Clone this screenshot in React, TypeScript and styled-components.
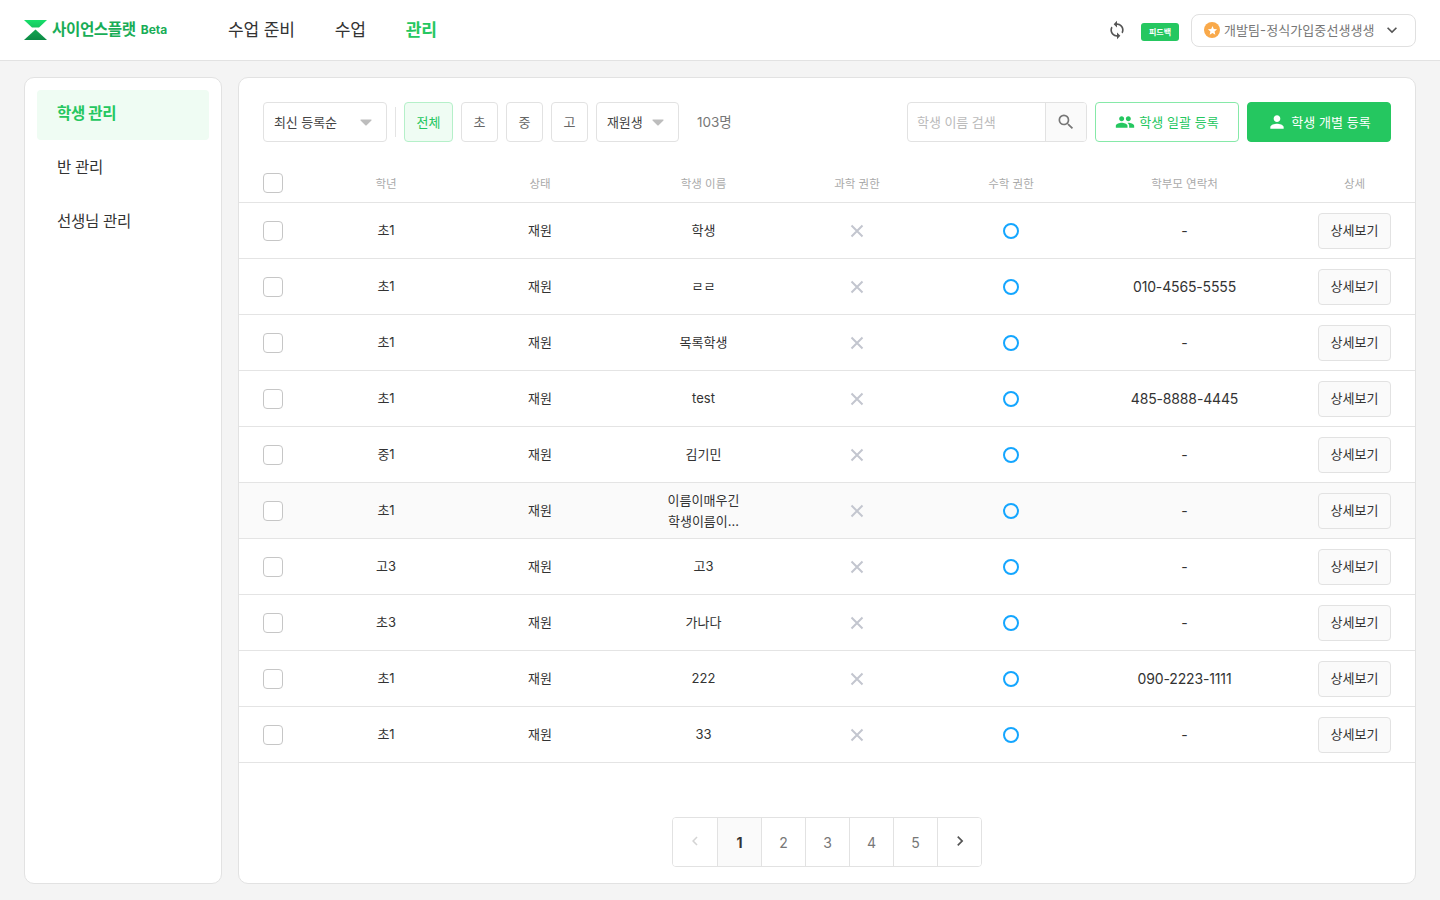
import React from "react";
import styled, { createGlobalStyle } from "styled-components";
import { MdSync, MdPeople, MdPerson, MdSearch, MdExpandMore, MdChevronLeft, MdChevronRight, MdStar } from "react-icons/md";

const Global = createGlobalStyle`
  * { box-sizing: border-box; }
  html, body { margin: 0; height: 100%; }
  body { background: #f4f4f4; font-family: Inter, "Noto Sans CJK KR", "Noto Sans", sans-serif; color: #333; }
  #root { height: 900px; overflow: hidden; }
`;

const Header = styled.header`
  height: 61px; background: #fff; border-bottom: 1px solid #e2e2e2;
  display: flex; align-items: center; padding: 0 24px;
`;
const Logo = styled.div`display: flex; align-items: center; width: 204px; color: #19ad57; line-height: 20px; padding-bottom: 1px;`;
const LogoName = styled.span`font-size: 15.6px; font-weight: 700; margin-left: 5px; letter-spacing: -0.4px;`;
const Beta = styled.span`font-size: 12px; font-weight: 700; margin-left: 5px;`;
const Nav = styled.nav`display: flex; gap: 40px; flex: 1; line-height: 24px; padding-bottom: 1px;`;
const NavItem = styled.span<{ $active?: boolean }>`
  font-size: 17.1px; font-weight: ${p => (p.$active ? 700 : 400)}; color: ${p => (p.$active ? "#25c760" : "#333")}; letter-spacing: -0.2px;
`;
const SyncButton = styled.span`display: flex; color: #555; margin-right: 14px;`;
const Badge = styled.span`
  width: 38px; height: 18px; border-radius: 3px; background: #25c760; color: #fff; font-size: 8px; font-weight: 700;
  display: flex; align-items: center; justify-content: center; margin: 3px 12px 0 0;
`;
const Profile = styled.div`
  width: 225px; height: 33px; border: 1px solid #e0e0e0; border-radius: 8px; display: flex; align-items: center;
  padding: 0 12px; color: #777; font-size: 13px; letter-spacing: 0.08px; line-height: 18px;
`;
const Medal = styled.span`
  width: 16px; height: 16px; border-radius: 50%; background: #f9a94a; color: #fff; display: flex; align-items: center; justify-content: center; margin-right: 4px; flex: none;
`;
const ProfileName = styled.span`flex: 1; white-space: nowrap; padding-bottom: 1px;`;
const ProfileChevron = styled.span`display: flex; color: #555; margin-right: 1px;`;

const Body = styled.div`display: flex; gap: 16px; padding: 16px 24px; height: 839px;`;
const Sidebar = styled.aside`
  width: 198px; background: #fff; border: 1px solid #e2e2e2; border-radius: 10px; padding: 12px; display: flex; flex-direction: column; gap: 4px;
`;
const SideItem = styled.div<{ $active?: boolean }>`
  height: 50px; border-radius: 4px; display: flex; align-items: center; padding: 0 20px 2px; font-size: 15.5px; letter-spacing: -0.3px; line-height: 22px;
  background: ${p => (p.$active ? "#effcf3" : "transparent")}; color: ${p => (p.$active ? "#25c760" : "#333")}; font-weight: ${p => (p.$active ? 700 : 400)};
`;
const Main = styled.main`
  flex: 1; background: #fff; border: 1px solid #e2e2e2; border-radius: 10px; display: flex; flex-direction: column;
`;
const Toolbar = styled.div`display: flex; align-items: center; padding: 24px 24px 0; height: 64px; gap: 8px; line-height: 20px;`;
const SelectBox = styled.div<{ $w: number }>`
  width: ${p => p.$w}px; height: 40px; border: 1px solid #e2e2e2; border-radius: 4px; display: flex; align-items: center; justify-content: space-between;
  padding: 0 14px 0 10px; font-size: 13px; color: #444; letter-spacing: -0.1px;
`;
const Divider = styled.span`width: 1px; height: 30px; background: #e4e4e4;`;
const Chip = styled.div<{ $active?: boolean }>`
  height: 40px; width: ${p => (p.$active ? 49 : 37)}px; border-radius: 4px; display: flex; align-items: center; justify-content: center; font-size: 13px;
  border: 1px solid ${p => (p.$active ? "#b5f0c9" : "#e2e2e2")}; background: ${p => (p.$active ? "#effcf3" : "#fff")}; color: ${p => (p.$active ? "#25c760" : "#666")};
`;
const Count = styled.span`font-size: 13.5px; color: #777; margin-left: 10px; flex: 1;`;
const Search = styled.div`
  width: 180px; height: 40px; border: 1px solid #e2e2e2; border-radius: 4px; display: flex; overflow: hidden;
`;
const SearchText = styled.div`flex: 1; display: flex; align-items: center; padding-left: 9px; font-size: 13px; color: #bbb; letter-spacing: -0.05px;`;
const SearchBtn = styled.div`
  width: 41px; background: #fafafa; border-left: 1px solid #e2e2e2; display: flex; align-items: center; justify-content: center; color: #777;
`;
const ActionBtn = styled.div<{ $solid?: boolean }>`
  width: 144px; height: 40px; border-radius: 4px; display: flex; align-items: center; justify-content: center; gap: 4px; font-size: 13px; letter-spacing: 0.05px;
  border: 1px solid ${p => (p.$solid ? "#25c760" : "#86e9a8")}; background: ${p => (p.$solid ? "#25c760" : "#fff")}; color: ${p => (p.$solid ? "#fff" : "#25c760")};
`;
const columns = "46px 154px 154px 173px 134px 174px 173px 1fr";
const HeadRow = styled.div`
  display: grid; grid-template-columns: ${columns}; align-items: center; height: 61px; padding: 22px 24px 0; border-bottom: 1px solid #e4e4e4;
  font-size: 11.5px; color: #aaa; text-align: center; line-height: 18px;
`;
const HeadCell = styled.div`padding-top: 1px;`;
const Row = styled.div<{ $hover?: boolean }>`
  display: grid; grid-template-columns: ${columns}; align-items: center; height: 56px; padding: 0 24px; border-bottom: 1px solid #e4e4e4;
  font-size: 13px; line-height: 21px; color: #333; text-align: center; background: ${p => (p.$hover ? "#fafafa" : "#fff")};
`;
const Check = styled.span`
  display: block; width: 20px; height: 20px; border: 1px solid #c6c6c6; border-radius: 4px; background: #fff;
`;
const NameCell = styled.div`width: 90px; justify-self: center; word-break: keep-all;`;
const PhoneCell = styled.div`font-size: 14px; letter-spacing: -0.15px;`;
const Mark = styled.div`display: flex; justify-content: center;`;
const Ring = styled.span`display: block; width: 16px; height: 16px; border-radius: 50%; border: 2px solid #14a6ff;`;
const DetailHead = styled(HeadCell)`width: 73px; justify-self: end;`;
const DetailBtn = styled.div`
  width: 73px; height: 36px; justify-self: end; background: #fafafa; border: 1px solid #e2e2e2; border-radius: 4px; display: flex; align-items: center; justify-content: center; font-size: 13px; color: #333;
`;
const PagerWrap = styled.div`margin-top: auto; display: flex; justify-content: center; padding-bottom: 16px;`;
const Pager = styled.div`display: flex; border: 1px solid #e2e2e2; border-radius: 4px; height: 50px; overflow: hidden;`;
const PageCell = styled.div<{ $current?: boolean; $icon?: string }>`
  width: 44px; display: flex; align-items: center; justify-content: center; font-size: 14px;
  border-left: 1px solid #e2e2e2; &:first-child { border-left: none; }
  background: ${p => (p.$current ? "#fafafa" : "#fff")}; font-weight: ${p => (p.$current ? 700 : 400)}; color: ${p => p.$icon || (p.$current ? "#333" : "#777")};
  & > svg { margin-top: -2px; }
`;

const Caret = () => (
  <svg width="12" height="7" viewBox="0 0 12 7"><path d="M1 0.5h10a.6.6 0 0 1 .45 1L6.4 6.4a.6.6 0 0 1-.85 0L.55 1.5A.6.6 0 0 1 1 .5z" fill="#bdbdbd" /></svg>
);
const Cross = () => (
  <svg width="14" height="14" viewBox="0 0 14 14"><path d="M1.5 1.5l11 11M12.5 1.5l-11 11" stroke="#c3c6cf" strokeWidth="2" fill="none" /></svg>
);
const LogoMark = () => (
  <svg width="23" height="20" viewBox="0 0 23 20">
    <defs>
      <linearGradient id="lt" x1="0" y1="0" x2="0" y2="1"><stop offset="0" stopColor="#16e06a" /><stop offset="1" stopColor="#16c45f" /></linearGradient>
      <linearGradient id="lb" x1="0" y1="0" x2="0" y2="1"><stop offset="0" stopColor="#15a653" /><stop offset="1" stopColor="#0c8a45" /></linearGradient>
    </defs>
    <path d="M0 0h23l-8 7.5H8z" fill="url(#lt)" />
    <path d="M11.5 9.5L23 20H0z" fill="url(#lb)" />
  </svg>
);

const rows = [
  ["초1", "학생", "-"],
  ["초1", "ㄹㄹ", "010-4565-5555"],
  ["초1", "목록학생", "-"],
  ["초1", "test", "485-8888-4445"],
  ["중1", "김기민", "-"],
  ["초1", "이름이매우긴 학생이름이...", "-"],
  ["고3", "고3", "-"],
  ["초3", "가나다", "-"],
  ["초1", "222", "090-2223-1111"],
  ["초1", "33", "-"],
];

export default function App() {
  return (
    <>
      <Global />
      <Header>
        <Logo>
          <LogoMark />
          <LogoName>사이언스플랫</LogoName>
          <Beta>Beta</Beta>
        </Logo>
        <Nav>
          <NavItem>수업 준비</NavItem>
          <NavItem>수업</NavItem>
          <NavItem $active>관리</NavItem>
        </Nav>
        <SyncButton><MdSync size={20} /></SyncButton>
        <Badge>피드백</Badge>
        <Profile>
          <Medal><MdStar size={11} /></Medal>
          <ProfileName>개발팀-정식가입중선생생생</ProfileName>
          <ProfileChevron><MdExpandMore size={20} /></ProfileChevron>
        </Profile>
      </Header>
      <Body>
        <Sidebar>
          <SideItem $active>학생 관리</SideItem>
          <SideItem>반 관리</SideItem>
          <SideItem>선생님 관리</SideItem>
        </Sidebar>
        <Main>
          <Toolbar>
            <SelectBox $w={124}>최신 등록순<Caret /></SelectBox>
            <Divider />
            <Chip $active>전체</Chip>
            <Chip>초</Chip>
            <Chip>중</Chip>
            <Chip>고</Chip>
            <SelectBox $w={83}>재원생<Caret /></SelectBox>
            <Count>103명</Count>
            <Search>
              <SearchText>학생 이름 검색</SearchText>
              <SearchBtn><MdSearch size={20} /></SearchBtn>
            </Search>
            <ActionBtn><MdPeople size={20} />학생 일괄 등록</ActionBtn>
            <ActionBtn $solid><MdPerson size={20} />학생 개별 등록</ActionBtn>
          </Toolbar>
          <HeadRow>
            <div><Check /></div>
            <HeadCell>학년</HeadCell>
            <HeadCell>상태</HeadCell>
            <HeadCell>학생 이름</HeadCell>
            <HeadCell>과학 권한</HeadCell>
            <HeadCell>수학 권한</HeadCell>
            <HeadCell>학부모 연락처</HeadCell>
            <DetailHead>상세</DetailHead>
          </HeadRow>
          {rows.map((r, i) => (
            <Row key={i} $hover={i === 5}>
              <div><Check /></div>
              <div>{r[0]}</div>
              <div>재원</div>
              <NameCell>{r[1]}</NameCell>
              <Mark><Cross /></Mark>
              <Mark><Ring /></Mark>
              <PhoneCell>{r[2]}</PhoneCell>
              <DetailBtn>상세보기</DetailBtn>
            </Row>
          ))}
          <PagerWrap>
            <Pager>
              <PageCell $icon="#d4d4d4"><MdChevronLeft size={18} /></PageCell>
              <PageCell $current>1</PageCell>
              <PageCell>2</PageCell>
              <PageCell>3</PageCell>
              <PageCell>4</PageCell>
              <PageCell>5</PageCell>
              <PageCell $icon="#555"><MdChevronRight size={20} /></PageCell>
            </Pager>
          </PagerWrap>
        </Main>
      </Body>
    </>
  );
}
